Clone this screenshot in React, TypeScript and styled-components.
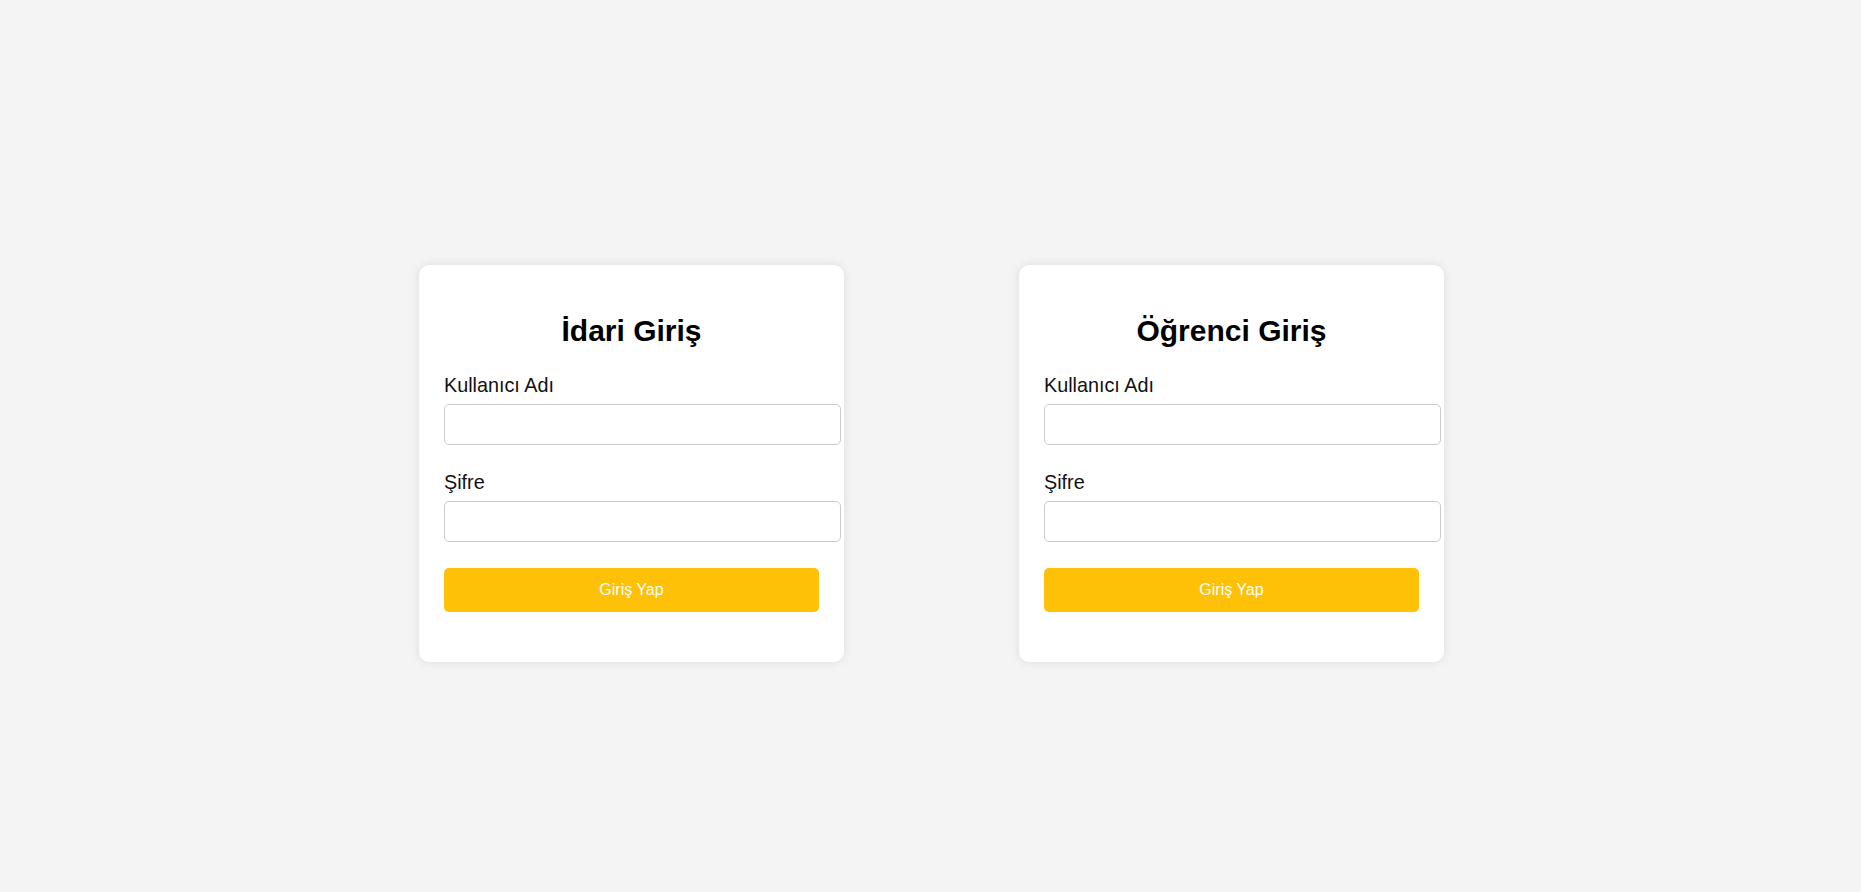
import React from "react";
import styled, { createGlobalStyle } from "styled-components";

const Global = createGlobalStyle`
  html, body { margin: 0; padding: 0; }
  body {
    background: #f4f4f4;
    font-family: "Liberation Sans", Arial, sans-serif;
  }
`;

const Page = styled.div`
  height: 892px;
  box-sizing: border-box;
  padding-top: 35px;
  padding-left: 2px;
  display: flex;
  align-items: center;
  justify-content: center;
  gap: 175px;
`;

const Card = styled.div`
  width: 375px;
  padding: 25px;
  background: #fff;
  border-radius: 10px;
  box-shadow: 0 0 10px rgba(0, 0, 0, 0.1);
  display: flex;
  flex-direction: column;
`;

const Title = styled.h2`
  margin: 24px 0 26px;
  font-size: 30px;
  line-height: 34px;
  font-weight: bold;
  color: #000;
  text-align: center;
`;

const Field = styled.div`
  display: flex;
  flex-direction: column;
  margin-bottom: 26px;
`;

const Label = styled.label`
  font-size: 19.8px;
  line-height: 22px;
  color: #111;
  margin-bottom: 7.5px;
`;

const Input = styled.input`
  box-sizing: border-box;
  width: calc(100% + 22px);
  height: 41.5px;
  padding: 10px;
  border: 1px solid #ccc;
  border-radius: 5px;
  font-size: 16px;
  font-family: inherit;
  background: #fff;
  outline: none;
`;

const Button = styled.button`
  width: 100%;
  height: 44px;
  margin-bottom: 25px;
  border: none;
  border-radius: 5px;
  background: #ffc107;
  color: #fff;
  font-size: 16px;
  font-family: inherit;
  cursor: pointer;
`;

function LoginCard({ title }: { title: string }) {
  return (
    <Card>
      <Title>{title}</Title>
      <Field>
        <Label>Kullanıcı Adı</Label>
        <Input type="text" />
      </Field>
      <Field>
        <Label>Şifre</Label>
        <Input type="password" />
      </Field>
      <Button>Giriş Yap</Button>
    </Card>
  );
}

export default function App() {
  return (
    <>
      <Global />
      <Page>
        <LoginCard title="İdari Giriş" />
        <LoginCard title="Öğrenci Giriş" />
      </Page>
    </>
  );
}
